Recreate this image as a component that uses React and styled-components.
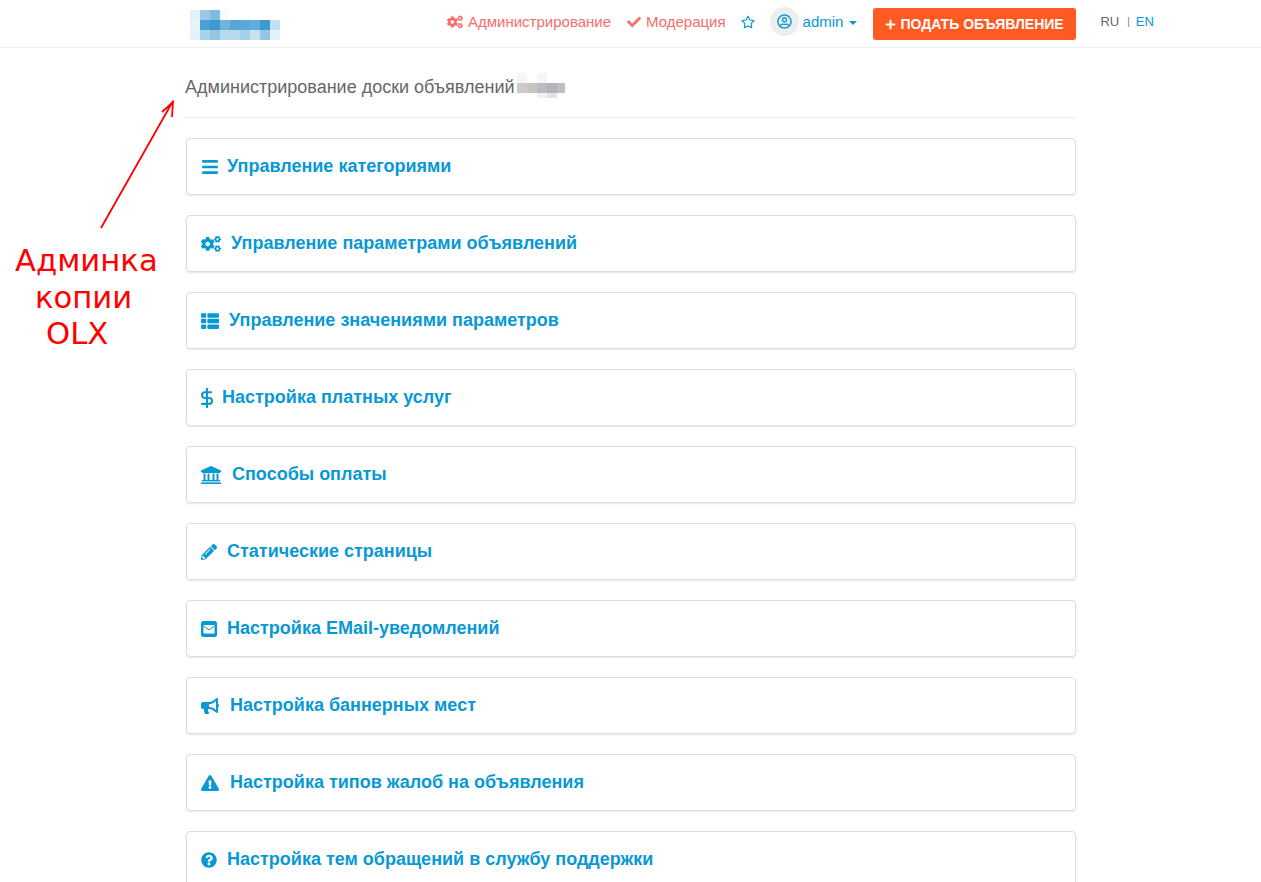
import React from 'react';
import styled, { createGlobalStyle } from 'styled-components';
import {
  FaBars, FaBullhorn, FaCheck, FaCogs, FaExclamationTriangle,
  FaPencilAlt, FaPlus, FaQuestionCircle, FaRegStar, FaRegUserCircle, FaThList,
} from 'react-icons/fa';
import { FiDollarSign } from 'react-icons/fi';

const LINK = '#0898d4';
const RED = '#fb6b6b';

const GlobalStyle = createGlobalStyle`
  html, body {
    margin: 0;
    height: 100%;
    overflow: hidden;
    background: #fff;
    font-family: "Liberation Sans", Arial, sans-serif;
  }
`;

const Page = styled.div`
  position: relative;
  height: 882px;
  overflow: hidden;
`;

const Header = styled.header`
  display: flex;
  align-items: flex-start;
  height: 47px;
  padding-left: 190px;
  border-bottom: 1px solid #eee;
`;

const Logo = styled.svg`
  display: block;
  margin-top: 10px;
`;

const Nav = styled.nav`
  display: flex;
  align-items: center;
  height: 29px;
  margin-top: 7px;
  margin-left: 167px;
`;

const NavLink = styled.a`
  display: flex;
  align-items: center;
  gap: 5px;
  margin-right: 16px;
  font-size: 15px;
  color: ${RED};
  white-space: nowrap;
  svg {
    flex: none;
  }
`;

const Star = styled(FaRegStar)`
  flex: none;
  color: ${LINK};
  font-size: 14px;
  margin-left: -1px;
  margin-right: 15px;
`;

const Avatar = styled.span`
  display: flex;
  align-items: center;
  justify-content: center;
  width: 29px;
  height: 29px;
  border-radius: 50%;
  background: #eee;
  color: ${LINK};
  font-size: 15px;
`;

const UserName = styled.span`
  margin-left: 4px;
  font-size: 15px;
  color: ${LINK};
`;

const Caret = styled.span`
  width: 0;
  height: 0;
  margin: 2px 16px 0 6px;
  border-top: 4px solid ${LINK};
  border-left: 4px solid transparent;
  border-right: 4px solid transparent;
`;

const AddButton = styled.a`
  display: flex;
  align-items: center;
  gap: 4px;
  align-self: flex-start;
  box-sizing: border-box;
  width: 203px;
  height: 32px;
  margin-top: 1px;
  padding-left: 12px;
  border-radius: 3px;
  background: #ff5a22;
  color: #fff;
  font-size: 14px;
  font-weight: 700;
  white-space: nowrap;
`;

const Langs = styled.div`
  display: flex;
  align-items: center;
  margin-left: 24px;
  font-size: 13px;
  color: #666;
`;

const Sep = styled.span`
  margin: 0 6px 0 8px;
  font-size: 10px;
  color: #777;
`;

const Lang = styled.a`
  color: ${LINK};
`;

const Main = styled.main`
  width: 891px;
  margin-left: 185px;
`;

const TitleRow = styled.div`
  display: flex;
  align-items: center;
  height: 69px;
  border-bottom: 1px solid #eee;
  margin-bottom: 20px;
`;

const Title = styled.h1`
  margin: 10px 0 0;
  font-size: 18px;
  font-weight: 400;
  color: #666;
`;

const Blur = styled.svg`
  display: block;
  margin-left: 2px;
  margin-top: 6px;
`;

const Panel = styled.a`
  display: flex;
  align-items: center;
  box-sizing: border-box;
  height: 57px;
  margin: 0 0 20px 1px;
  padding-left: 14px;
  border: 1px solid #ddd;
  border-radius: 4px;
  box-shadow: 0 1px 2px rgba(0, 0, 0, 0.1);
  color: ${LINK};
  font-size: 18px;
  font-weight: 700;
`;

const IconBox = styled.span`
  flex: none;
  display: flex;
  align-items: center;
  width: ${(p) => p.$w}px;
  font-size: ${(p) => p.$size}px;
`;

const Note = styled.div`
  position: absolute;
  left: 15px;
  top: 243px;
  font-family: "DejaVu Sans", Verdana, sans-serif;
  font-size: 30.7px;
  line-height: 36.5px;
  color: #ff0000;
  white-space: pre;
`;

const NoteLine = styled.div`
  padding-left: ${(p) => p.$indent}px;
`;

const Arrow = styled.svg`
  position: absolute;
  left: 95px;
  top: 95px;
`;

const Dollar = styled(FiDollarSign)`
  margin-left: -4px;
  stroke-width: 2.5;
`;

const DollarIcon = () => <Dollar size={20} />;

const BankIcon = () => (
  <svg width="20" height="18" viewBox="0 0 20 18" fill="currentColor">
    <path d="M10 0 L20 4.5 V6 H0 V4.5 Z" />
    <rect x="1" y="6" width="18" height="1" />
    <rect x="2.5" y="7.5" width="2" height="6.5" />
    <rect x="6.5" y="7.5" width="2" height="6.5" />
    <rect x="11.5" y="7.5" width="2" height="6.5" />
    <rect x="15.5" y="7.5" width="2" height="6.5" />
    <rect x="1" y="14" width="18" height="1.4" />
    <rect x="0" y="16.4" width="20" height="1.6" />
  </svg>
);

const MailIcon = () => (
  <svg width="16" height="16" viewBox="0 0 16 16">
    <rect width="16" height="16" rx="2.5" fill="currentColor" />
    <rect x="2.5" y="4" width="11" height="8.5" rx="0.5" fill="#fff" />
    <path d="M2.5 5 L8 9 L13.5 5" fill="none" stroke="currentColor" strokeWidth="1" />
  </svg>
);

const logoCells = [
  ['#e3f1f9', '#97c9e6', '#7fbde0', '#f8fcff'],
  ['#e9f4fa', '#4aa0d5', '#3d99d0', '#6fb3da', '#55a5d5', '#5aa8d6', '#62acd8', '#3c9ad0', '#c3e0f0'],
  ['#e3f1f8', '#a9d2ea', '#92c6e4', '#b6d9ec', '#b6d9ec', '#a5d0e8', '#c6e1f0', '#92c6e4', '#e3f1f8'],
];

const blurCells = [
  ['#f6f6f6', '#fff', '#f6f5f5', '#fff', '#fff'],
  ['#cdcaca', '#c8c5c5', '#b9bcc1', '#b5b4b6', '#bcc0c5'],
  ['#fff', '#fff', '#f3efef', '#e2e2e8', '#fff'],
];

const items = [
  { icon: FaBars, w: 26, size: 18, text: 'Управление категориями' },
  { icon: FaCogs, w: 30, size: 20, text: 'Управление параметрами объявлений' },
  { icon: FaThList, w: 28, size: 18, text: 'Управление значениями параметров' },
  { icon: DollarIcon, w: 21, size: 18, text: 'Настройка платных услуг' },
  { icon: BankIcon, w: 31, size: 20, text: 'Способы оплаты' },
  { icon: FaPencilAlt, w: 26, size: 16, text: 'Статические страницы' },
  { icon: MailIcon, w: 26, size: 18, text: 'Настройка EMail-уведомлений' },
  { icon: FaBullhorn, w: 29, size: 18, text: 'Настройка баннерных мест' },
  { icon: FaExclamationTriangle, w: 29, size: 18, text: 'Настройка типов жалоб на объявления' },
  { icon: FaQuestionCircle, w: 26, size: 16, text: 'Настройка тем обращений в службу поддержки' },
];

export default function App() {
  return (
    <Page>
      <GlobalStyle />
      <Header>
        <Logo width="90" height="30" viewBox="0 0 90 30">
          {logoCells.map((row, y) =>
            row.map((fill, x) => <rect key={`${x}-${y}`} x={x * 10} y={y * 10} width="10" height="10" fill={fill} />)
          )}
        </Logo>
        <Nav>
          <NavLink>
            <FaCogs size={16} />
            Администрирование
          </NavLink>
          <NavLink>
            <FaCheck size={14} />
            Модерация
          </NavLink>
          <Star />
          <Avatar>
            <FaRegUserCircle />
          </Avatar>
          <UserName>admin</UserName>
          <Caret />
          <AddButton>
            <FaPlus size={11} />
            ПОДАТЬ ОБЪЯВЛЕНИЕ
          </AddButton>
          <Langs>
            RU
            <Sep>|</Sep>
            <Lang>EN</Lang>
          </Langs>
        </Nav>
      </Header>
      <Main>
        <TitleRow>
          <Title>Администрирование доски объявлений</Title>
          <Blur width="48" height="25" viewBox="0 0 48 25">
            {blurCells.map((row, y) =>
              row.map((fill, x) => <rect key={`${x}-${y}`} x={x * 10} y={y * 10} width="10" height="10" fill={fill} />)
            )}
          </Blur>
        </TitleRow>
        {items.map(({ icon: Icon, w, size, text }) => (
          <Panel key={text}>
            <IconBox $w={w} $size={size}>
              <Icon />
            </IconBox>
            {text}
          </Panel>
        ))}
      </Main>
      <Arrow width="90" height="140" viewBox="0 0 90 140">
        <path d="M6 133 L78 6 M67 17 L78 7 L77 22" fill="none" stroke="#ff0000" strokeWidth="1.8" />
      </Arrow>
      <Note>
        <NoteLine $indent={0}>Админка</NoteLine>
        <NoteLine $indent={20}>копии</NoteLine>
        <NoteLine $indent={31}>OLX</NoteLine>
      </Note>
    </Page>
  );
}
